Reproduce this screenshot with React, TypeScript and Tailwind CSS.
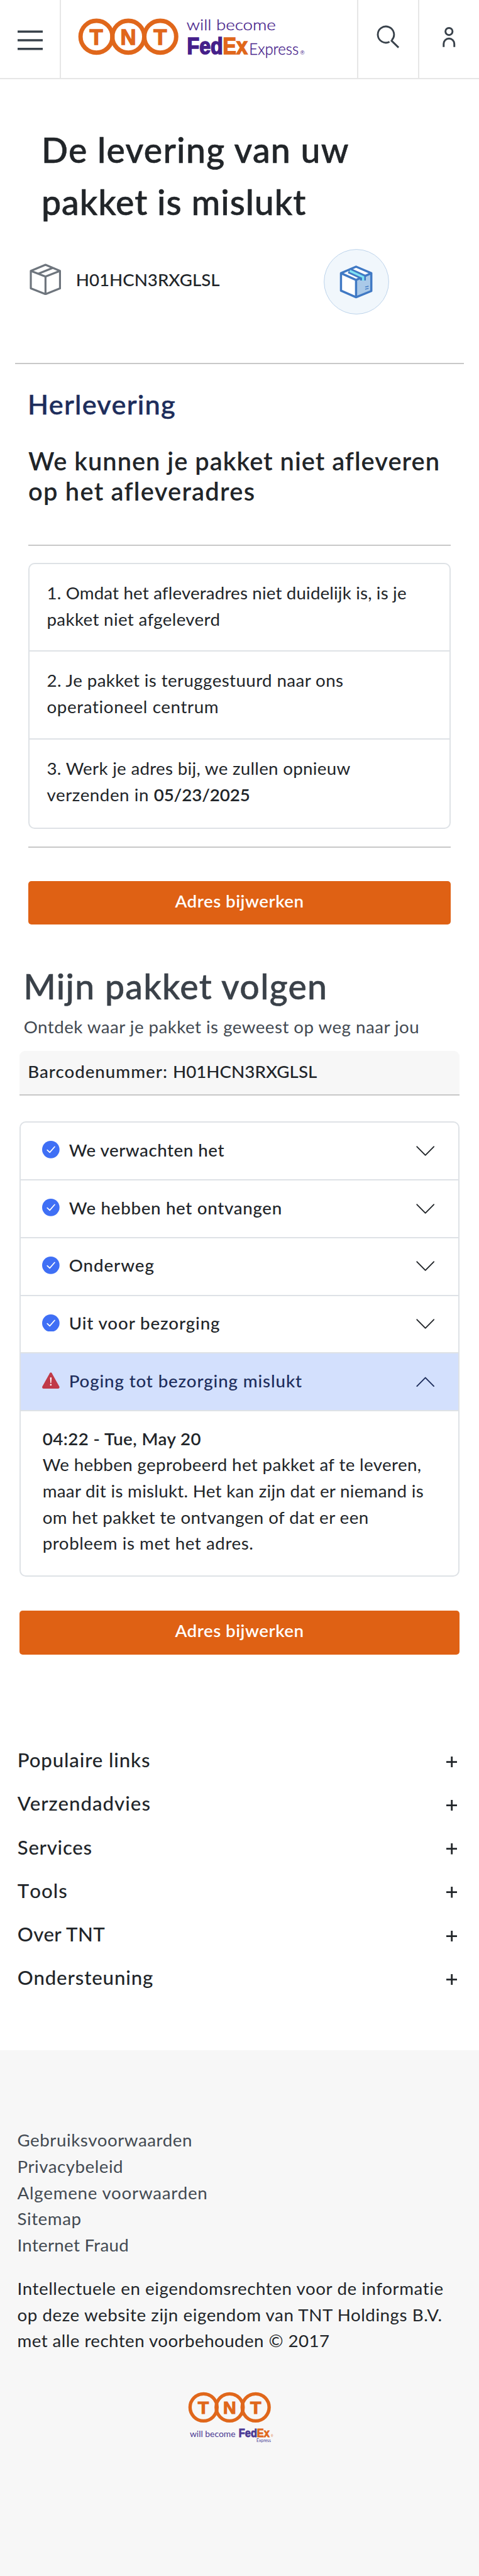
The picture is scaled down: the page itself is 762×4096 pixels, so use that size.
import React from "react";

type Line = { text: string; tracking: string };

const addressParagraph: Line[] = [
  { text: "We hebben geprobeerd het pakket af te leveren,", tracking: "tracking-[0.38px]" },
  { text: "maar dit is mislukt. Het kan zijn dat er niemand is", tracking: "tracking-[0.3px]" },
  { text: "om het pakket te ontvangen of dat er een", tracking: "tracking-[0.44px]" },
  { text: "probleem is met het adres.", tracking: "tracking-[0.57px]" },
];

const doneSteps: Line[] = [
  { text: "We verwachten het", tracking: "tracking-[0.54px]" },
  { text: "We hebben het ontvangen", tracking: "tracking-[0.7px]" },
  { text: "Onderweg", tracking: "tracking-[0.94px]" },
  { text: "Uit voor bezorging", tracking: "tracking-[0.9px]" },
];

const footerSections: Line[] = [
  { text: "Populaire links", tracking: "tracking-[0.85px]" },
  { text: "Verzendadvies", tracking: "tracking-[1px]" },
  { text: "Services", tracking: "tracking-[0.7px]" },
  { text: "Tools", tracking: "tracking-[1px] [font-kerning:none]" },
  { text: "Over TNT", tracking: "tracking-[0.45px]" },
  { text: "Ondersteuning", tracking: "tracking-[0.87px]" },
];

const legalLinks: Line[] = [
  { text: "Gebruiksvoorwaarden", tracking: "tracking-[0.56px]" },
  { text: "Privacybeleid", tracking: "tracking-[0.53px]" },
  { text: "Algemene voorwaarden", tracking: "tracking-[0.78px]" },
  { text: "Sitemap", tracking: "tracking-[0.57px]" },
  { text: "Internet Fraud", tracking: "tracking-[0.3px]" },
];

const legalText: Line[] = [
  { text: "Intellectuele en eigendomsrechten voor de informatie", tracking: "tracking-[0.59px]" },
  { text: "op deze website zijn eigendom van TNT Holdings B.V.", tracking: "tracking-[0.57px]" },
  { text: "met alle rechten voorbehouden © 2017", tracking: "tracking-[0.45px]" },
];

function Lines({ lines }: { lines: Line[] }) {
  return (
    <>
      {lines.map((l) => (
        <div key={l.text} className={l.tracking}>
          {l.text}
        </div>
      ))}
    </>
  );
}

function HeaderLogo() {
  return (
    <svg viewBox="140 30 430 80" className="h-[69.3px] w-[372.3px] overflow-visible" aria-label="TNT will become FedEx Express">
      <g fill="none" stroke="#e0671b" strokeWidth="8">
        <circle cx="177.5" cy="67.3" r="29.3" />
        <circle cx="236" cy="67.3" r="29.3" />
        <circle cx="294.7" cy="67.3" r="29.3" />
      </g>
      <g fill="#e0671b" stroke="#e0671b" strokeWidth="1.6" fontFamily="Liberation Sans" fontWeight="700" fontSize="40" textAnchor="middle">
        <text x="177.2" y="81.7">T</text>
        <text x="236" y="81.7">N</text>
        <text x="294.7" y="81.7">T</text>
      </g>
      <text x="343" y="55" fill="#45208a" stroke="#45208a" strokeWidth="0.4" fontFamily="Lato" fontWeight="300" fontSize="28" textLength="164" lengthAdjust="spacingAndGlyphs">will become</text>
      <text x="344" y="99.2" fontFamily="Liberation Sans" fontWeight="700" fontSize="43.5" strokeWidth="2" textLength="111" lengthAdjust="spacingAndGlyphs">
        <tspan fill="#45208a" stroke="#45208a">Fed</tspan><tspan fill="#e0671b" stroke="#e0671b">Ex</tspan>
      </text>
      <text x="458" y="100" fill="#45208a" stroke="#45208a" strokeWidth="0.4" fontFamily="Lato" fontWeight="300" fontSize="29" textLength="91" lengthAdjust="spacingAndGlyphs">Express</text>
      <text x="552" y="100" fill="#45208a" fontFamily="Liberation Sans" fontSize="10.5">®</text>
    </svg>
  );
}

function FooterLogo() {
  return (
    <svg viewBox="340 4390 210 100" className="h-[86.6px] w-[181.8px] overflow-visible" aria-label="TNT will become FedEx Express">
      <g fill="none" stroke="#e0671b" strokeWidth="6.2">
        <circle cx="373.3" cy="4421" r="24.8" />
        <circle cx="421.2" cy="4421" r="24.8" />
        <circle cx="469" cy="4421" r="24.8" />
      </g>
      <g fill="#e0671b" stroke="#e0671b" strokeWidth="1.4" fontFamily="Liberation Sans" fontWeight="700" fontSize="33" textAnchor="middle">
        <text x="373" y="4433">T</text>
        <text x="421.2" y="4433">N</text>
        <text x="469" y="4433">T</text>
      </g>
      <text x="348" y="4476" fill="#4b3a94" fontFamily="Lato" fontSize="14.5" textLength="84" lengthAdjust="spacingAndGlyphs">will become</text>
      <text x="438" y="4475.6" fontFamily="Liberation Sans" fontWeight="700" fontSize="21.5" strokeWidth="1" textLength="56.6" lengthAdjust="spacingAndGlyphs">
        <tspan fill="#4b3a94" stroke="#4b3a94">Fed</tspan><tspan fill="#e0671b" stroke="#e0671b">Ex</tspan>
      </text>
      <text x="470.6" y="4484.7" fill="#4b3a94" fontFamily="Lato" fontSize="7.6" textLength="26.4" lengthAdjust="spacingAndGlyphs">Express</text>
      <text x="497" y="4476" fill="#e0671b" fontFamily="Liberation Sans" fontSize="5.5">®</text>
    </svg>
  );
}

function Chevron({ up = false }: { up?: boolean }) {
  return (
    <svg viewBox="0 0 34 19" className="h-[16.4px] w-[29.4px]" fill="none" stroke={up ? "#1d2d5c" : "#212529"} strokeWidth="2.2" strokeLinecap="round" strokeLinejoin="round">
      <path d={up ? "M1.5 17.5 17 1.8l15.500 15.700" : "M1.5 1.5 17 17.200 32.500 1.500"} />
    </svg>
  );
}

function CheckBadge() {
  return (
    <svg viewBox="0 0 32 32" className="h-[27.7px] w-[27.7px]">
      <circle cx="16" cy="16" r="16" fill="#3f6ff5" />
      <path d="M9.500 17 14 21.300 23 11" fill="none" stroke="#fff" strokeWidth="2" strokeLinecap="round" strokeLinejoin="round" />
    </svg>
  );
}

function WarningBadge() {
  return (
    <svg viewBox="0 0 32 30" className="h-[26px] w-[27.7px]">
      <path d="M14.200 1.300Q16-.8 17.800 1.300L31.700 26.300Q32.600 29.800 29.800 30H2.200Q-.6 29.800.3 26.300Z" fill="#c03a48" />
      <path d="M14.600 9.500h2.800l-.7 10h-1.400z" fill="#fff" />
      <circle cx="16" cy="23" r="1.500" fill="#fff" />
    </svg>
  );
}

function Button({ className }: { className: string }) {
  return (
    <button className={`flex h-[69.3px] items-center justify-center rounded-[5px] bg-[#df6114] pb-[6px] font-semibold tracking-[0.5px] text-white ${className}`}>
      Adres bijwerken
    </button>
  );
}

export default function App() {
  return (
    <div className="flex h-[4096px] w-[762px] flex-col overflow-hidden bg-white font-['Lato','Open_Sans',sans-serif] text-[27.7px] leading-[41.56px] whitespace-nowrap text-[#212529]">
      <header className="flex h-[126.400px] shrink-0 border-b-2 border-[#e6e6e6]">
        <div className="flex w-[97px] items-center justify-center border-r-2 border-[#e6e6e6] pt-1">
          <svg viewBox="0 0 40 32" className="h-8 w-10" fill="#39424b">
            <path d="M0 .500h40v3.400H0zM0 14.300h40v3.400H0zM0 28.100h40v3.400H0z" />
          </svg>
        </div>
        <div className="flex-1 pt-[26px] pl-[24.200px]">
          <HeaderLogo />
        </div>
        <div className="flex w-[97px] items-center justify-center border-l-2 border-[#e6e6e6] pb-[7px]">
          <svg viewBox="692 46 42 43" className="h-[37.2px] w-[36.4px]" fill="none" stroke="#39424b" strokeWidth="3.300">
            <path d="M732.500 87.200 718.500 73.600M720.200 73.400A14.900 14.900 0 1 0 715.800 76.700" />
          </svg>
        </div>
        <div className="flex w-[97px] items-center justify-center border-l-2 border-[#e6e6e6] pb-[6px]">
          <svg viewBox="812 48 26 40" className="h-[34.6px] w-[22.5px]" fill="none" stroke="#39424b" strokeWidth="3.400">
            <circle cx="825" cy="57.300" r="6.500" />
            <path d="M815.200 86V80a9.800 9.800 0 0 1 19.600 0v6" />
          </svg>
        </div>
      </header>

      <h1 className="mt-[69.4px] pl-[66px] text-[55.4px] leading-[83.1px] font-medium [-webkit-text-stroke:0.6px]">
        <div className="tracking-[1.32px]">De levering van uw</div>
        <div className="tracking-[0.95px]">pakket is mislukt</div>
      </h1>

      <div className="mt-[34px] flex h-[104px] shrink-0 items-center pl-[47px]">
        <div className="flex w-[467.5px] items-center gap-[23.5px] pb-2">
          <svg viewBox="43 131 174 174" className="h-[50.2px] w-[50.2px]" fill="none" stroke="#6e757d" strokeWidth="11" strokeLinejoin="round">
            <path d="M131 138 211 172v96l-80 32-81-32v-96zM50 172l81 31 80-31M131 203v97M91 187l80-32" />
          </svg>
          <span className="pt-[2px] font-medium">H01HCN3RXGLSL</span>
        </div>
        <svg viewBox="43 53 360 360" className="h-[104px] w-[104px]">
          <circle cx="223" cy="233" r="178" fill="#f1f7fc" stroke="#b4cde8" strokeWidth="3" />
          <path d="M138 186 221 225v93l-83-36z" fill="#fff" />
          <path d="M221 225 305 186v98l-84 34z" fill="#aac9e8" />
          <path d="M138 186 221 149l84 37-84 39z" fill="#fff" />
          <g fill="none" stroke="#4079c4" strokeWidth="12" strokeLinejoin="round">
            <path d="M221 150 305 186v98l-84 34-83-36v-96zM138 186l83 37 84-37M221 223v95" />
            <path d="M182 171 259 206v20" strokeWidth="32" strokeLinejoin="miter" />
          </g>
          <path d="M186 173 260 207v20" fill="none" stroke="#7ee2f2" strokeWidth="12" />
          <path d="M271 262 290 257M271 274l19-5" fill="none" stroke="#4079c4" strokeWidth="5" />
        </svg>
      </div>

      <hr className="mx-[24.2px] mt-[76.6px] h-[2px] shrink-0 border-0 bg-[#c8c8c8]" />

      <section className="flex flex-col px-[45px]">
        <h2 className="mt-[37.200px] -ml-px text-[43.3px] leading-[52px] font-medium tracking-[1.26px] text-[#1d2d5c] [-webkit-text-stroke:0.5px]">Herlevering</h2>
        <h3 className="mt-[41px] text-[39.8px] leading-[48.7px] font-semibold">
          <div className="tracking-[1px]">We kunnen je pakket niet afleveren</div>
          <div className="tracking-[1.25px]">op het afleveradres</div>
        </h3>
        <hr className="mt-[59.8px] h-[2px] border-0 bg-[#c8c8c8]" />
        <div className="mt-[27px] flex flex-col divide-y-2 divide-[#dee2e6] rounded-[10px] border-2 border-[#dee2e6]">
          <div className="h-[139px] pt-[25px] pl-[27.5px]">
            <div className="tracking-[0.17px]">1. Omdat het afleveradres niet duidelijk is, is je</div>
            <div className="tracking-[0.35px]">pakket niet afgeleverd</div>
          </div>
          <div className="h-[140.300px] pt-[25px] pl-[27.5px]">
            <div className="tracking-[0.41px]">2. Je pakket is teruggestuurd naar ons</div>
            <div className="tracking-[0.64px]">operationeel centrum</div>
          </div>
          <div className="h-[139.700px] pt-[25px] pl-[27.5px]">
            <div className="tracking-[0.3px]">3. Werk je adres bij, we zullen opnieuw</div>
            <div className="tracking-[0.57px]">
              verzenden in <span className="font-semibold tracking-[-0.1px]">05/23/2025</span>
            </div>
          </div>
        </div>
        <hr className="mt-[27.600px] h-[2px] border-0 bg-[#c8c8c8]" />
        <Button className="mt-[53.400px]" />
      </section>

      <section className="flex flex-col px-[31.2px]">
        <h2 className="mt-[64.5px] pl-[6px] text-[55.4px] leading-[66px] font-medium tracking-[1.3px] text-[#3a4149] [-webkit-text-stroke:0.5px]">Mijn pakket volgen</h2>
        <p className="mt-[11.5px] pl-[6.5px] tracking-[0.47px] text-[#434a52]">Ontdek waar je pakket is geweest op weg naar jou</p>
        <div className="mt-[17.2px] flex h-[71px] items-center rounded-t-[9px] border-b-2 border-[#c8c8c8] bg-[#f7f7f7] pb-[3px] pl-[13px] font-medium">
          <span className="whitespace-pre tracking-[1px]">Barcodenummer: </span>
          <span className="tracking-[0.05px]">H01HCN3RXGLSL</span>
        </div>

        <div className="mt-[41.500px] h-[723.8px] overflow-hidden rounded-[10px] border-2 border-[#dee2e6]">
          {doneSteps.map((s) => (
            <div key={s.text} className="flex h-[91.7px] items-center border-b-2 border-[#dee2e6] pr-[37px] pl-[34.3px]">
              <div className="flex flex-1 items-center gap-[14.5px] pb-[4px]">
                <CheckBadge />
                <span className={`pt-px font-medium ${s.tracking}`}>{s.text}</span>
              </div>
              <Chevron />
            </div>
          ))}
          <div className="flex h-[91.7px] items-center border-b-2 border-[#dee2e6] bg-[#d3e0fd] pr-[37px] pl-[34.3px] text-[#1d2d5c]">
            <div className="flex flex-1 items-center gap-[14.5px] pb-[4px]">
              <WarningBadge />
              <span className="pt-px font-medium tracking-[0.88px]">Poging tot bezorging mislukt</span>
            </div>
            <Chevron up />
          </div>
          <div className="pt-[23.5px] pl-[34.5px]">
            <div className="h-[41px] font-semibold tracking-[0.46px]">04:22 - Tue, May 20</div>
            <Lines lines={addressParagraph} />
          </div>
        </div>
        <Button className="mt-[54px]" />
      </section>

      <nav className="mt-[133.8px] pr-[35px] pl-[27.8px]">
        {footerSections.map((s) => (
          <div key={s.text} className="flex h-[69.2px] items-center justify-between text-[31.2px] font-medium">
            <span className={s.tracking}>{s.text}</span>
            <svg viewBox="0 0 20 20" className="mt-[5px] h-[17.4px] w-[17.4px]" stroke="#212529" strokeWidth="3.200">
              <path d="M10 0v20M0 10h20" />
            </svg>
          </div>
        ))}
      </nav>

      <footer className="mt-[81px] flex flex-1 flex-col bg-[#f7f7f7] pt-[121.900px] pl-[27.5px]">
        <div className="text-[#434a52]">
          <Lines lines={legalLinks} />
        </div>
        <div className="mt-[28px]">
          <Lines lines={legalText} />
        </div>
        <div className="mt-[58px] pl-[267px]">
          <FooterLogo />
        </div>
      </footer>
    </div>
  );
}
